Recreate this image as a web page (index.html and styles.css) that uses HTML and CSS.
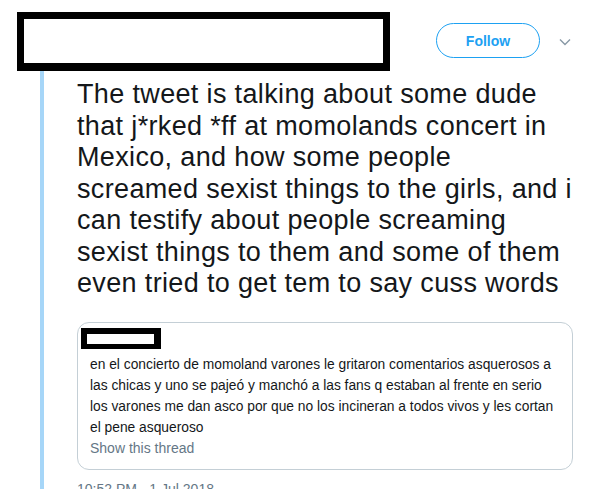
FILE: index.html
```html
<!DOCTYPE html>
<html>
<head>
<meta charset="utf-8">
<link rel="stylesheet" href="styles.css">
</head>
<body>
<div class="tweet">
  <div class="header">
    <div class="redact"></div>
    <div class="actions">
      <button class="follow">Follow</button>
      <svg class="chev" width="12" height="8" viewBox="0 0 12 8"><path d="M1 1.5 L6 6.5 L11 1.5" fill="none" stroke="#8899a6" stroke-width="1.4"/></svg>
    </div>
  </div>
  <div class="body">
    <div class="rail"></div>
    <div class="content">
      <p class="text">The tweet is talking about some dude that j*rked *ff at momolands concert in Mexico, and how some people screamed sexist things to the girls, and i can testify about people screaming sexist things to them and some of them even tried to get tem to say cuss words</p>
      <div class="quote">
        <div class="qredact"></div>
        <p class="qtext">en el concierto de momoland varones le gritaron comentarios asquerosos a las chicas y uno se pajeó y manchó a las fans q estaban al frente en serio los varones me dan asco por que no los incineran a todos vivos y les cortan el pene asqueroso</p>
        <div class="thread">Show this thread</div>
      </div>
      <div class="time">10:52 PM - 1 Jul 2018</div>
    </div>
  </div>
</div>
</body>
</html>
```

FILE: styles.css
```css
html, body {
  margin: 0;
  padding: 0;
  background: #ffffff;
  font-family: "Liberation Sans", Arial, Helvetica, sans-serif;
  color: #14171a;
}
.tweet {
  width: 607px;
  height: 489px;
  overflow: hidden;
}
.header {
  display: flex;
  align-items: flex-start;
  padding: 12px 0 0 17px;
}
.redact {
  width: 359px;
  height: 44px;
  border: 7px solid #000;
  border-bottom-width: 8px;
  background: #fff;
}
.actions {
  display: flex;
  align-items: center;
  margin-left: 46px;
  margin-top: 11px;
}
.follow {
  width: 104px;
  height: 35px;
  border: 1px solid #1da1f2;
  border-radius: 18px;
  background: #fff;
  color: #1da1f2;
  font-family: "Liberation Sans", Arial, sans-serif;
  font-weight: bold;
  font-size: 14px;
  padding: 0;
}
.chev {
  margin-left: 19px;
  margin-top: 2px;
}
.body {
  display: flex;
}
.rail {
  width: 4px;
  margin-left: 40px;
  background: #a6d6f8;
  height: 420px;
  flex: none;
}
.content {
  margin-left: 33px;
  width: 496px;
}
.text {
  margin: 8px 0 0 0;
  font-size: 27px;
  line-height: 31.5px;
  letter-spacing: 0.35px;
  color: #14171a;
}
.quote {
  margin-top: 22px;
  border: 1px solid #c4cfd6;
  border-radius: 12px;
  padding: 5px 16px 10px 12px;
  height: 131px;
}
.qredact {
  width: 67px;
  height: 10px;
  border: 6px solid #000;
  border-right-width: 7px;
  border-bottom-width: 5px;
  background: #fff;
  margin-left: -9px;
}
.qtext {
  margin: 5px 0 0 0;
  font-size: 13.8px;
  line-height: 21px;
  color: #14171a;
}
.thread {
  font-size: 14px;
  line-height: 20px;
  color: #657786;
}
.time {
  margin-top: 10px;
  font-size: 14px;
  line-height: 18px;
  color: #657786;
}
```
